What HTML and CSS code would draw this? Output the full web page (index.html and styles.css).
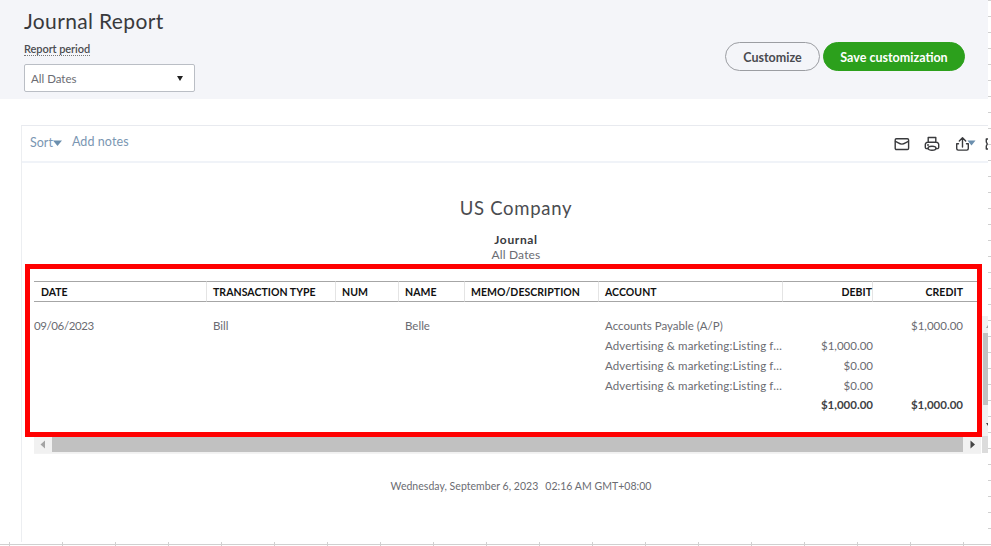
FILE: index.html
```
<!DOCTYPE html>
<html lang="en">
<head>
    <meta charset="UTF-8">
    <meta name="viewport" content="width=device-width, initial-scale=1.0">
    <title>Journal Report</title>
    <link rel="stylesheet" href="styles.css">
</head>
<body>
    <div class="page">
        <div class="screen">
            <header class="report-header">
                <div class="report-options">
                    <h1>Journal Report</h1>
                    <span class="period-label">Report period</span>
                    <div class="period-select">
                        <span>All Dates</span>
                        <svg width="6" height="5" viewBox="0 0 6 5"><path d="M0 0h6L3 5z" fill="#222"/></svg>
                    </div>
                </div>
                <div class="header-buttons">
                    <button class="btn">Customize</button>
                    <button class="btn btn-green">Save customization</button>
                </div>
            </header>

            <main class="panel">
                <div class="toolbar">
                    <div class="toolbar-links">
                        <a class="sort">Sort<svg width="9" height="6" viewBox="0 0 9 6"><path d="M0 .5h9L4.500 6z" fill="#6b8fae"/></svg></a>
                        <a class="notes">Add notes</a>
                    </div>
                    <div class="toolbar-icons">
                        <svg class="icon-mail" width="16" height="14" viewBox="0 0 16 14"><rect x="1.2" y="1.7" width="13.4" height="10.8" rx="1.2"/><path d="M1.5 4.5c2 .6 4 2.600 6.400 2.600s4.400-2 6.400-2.600"/></svg>
                        <svg class="icon-print" width="16" height="16" viewBox="0 0 16 16"><path d="M4.200 6V1.500h7.600V6M4 12.600H2.700a1.400 1.400 0 0 1-1.400-1.400V8.600A2.300 2.300 0 0 1 3.600 6.300h8.800a2.300 2.300 0 0 1 2.300 2.300v2.600a1.400 1.400 0 0 1-1.400 1.400H12"/><ellipse cx="8" cy="12.300" rx="4" ry="2"/><path d="M3.500 9h1"/></svg>
                        <svg class="icon-export" width="21" height="16" viewBox="0 0 21 16"><path d="M3.500 7.700H1.700v4.900a1.500 1.500 0 0 0 1.500 1.500h8.600a1.500 1.500 0 0 0 1.500-1.500V7.700h-1.800M7.500 11V2M4.300 5l3.200-3.200L10.700 5"/><path class="caret" d="M12.500 4.500h8l-4 5z"/></svg>
                        <svg class="icon-gear" width="3" height="14" viewBox="0 0 3 14"><path d="M3 2H1.300v3L2.300 7 1.300 9v3H3"/></svg>
                    </div>
                </div>

                <div class="report">
                    <h2>US Company</h2>
                    <p class="report-name">Journal</p>
                    <p class="report-range">All Dates</p>

                    <table class="journal">
                        <colgroup>
                            <col class="c-date"><col class="c-type"><col class="c-num"><col class="c-name">
                            <col class="c-memo"><col class="c-account"><col class="c-debit"><col class="c-credit">
                        </colgroup>
                        <thead>
                            <tr>
                                <th>DATE</th>
                                <th>TRANSACTION TYPE</th>
                                <th>NUM</th>
                                <th>NAME</th>
                                <th>MEMO/DESCRIPTION</th>
                                <th>ACCOUNT</th>
                                <th class="debit">DEBIT</th>
                                <th class="credit">CREDIT</th>
                            </tr>
                        </thead>
                        <tbody>
                            <tr class="first">
                                <td class="date">09/06/2023</td><td>Bill</td><td></td><td>Belle</td><td></td>
                                <td>Accounts Payable (A/P)</td><td class="debit"></td><td class="credit">$1,000.00</td>
                            </tr>
                            <tr>
                                <td></td><td></td><td></td><td></td><td></td>
                                <td class="account">Advertising &amp; marketing:Listing f…</td><td class="debit">$1,000.00</td><td></td>
                            </tr>
                            <tr>
                                <td></td><td></td><td></td><td></td><td></td>
                                <td class="account">Advertising &amp; marketing:Listing f…</td><td class="debit">$0.00</td><td></td>
                            </tr>
                            <tr>
                                <td></td><td></td><td></td><td></td><td></td>
                                <td class="account">Advertising &amp; marketing:Listing f…</td><td class="debit">$0.00</td><td></td>
                            </tr>
                            <tr class="total">
                                <td></td><td></td><td></td><td></td><td></td><td></td>
                                <td class="debit">$1,000.00</td><td class="credit">$1,000.00</td>
                            </tr>
                        </tbody>
                    </table>

                    <div class="scroll-x">
                        <svg width="18" height="16" viewBox="0 0 18 16"><path d="M11 3.500v8L6.500 7.500z" fill="#a3a3a3"/></svg>
                        <div class="thumb-x"></div>
                        <svg width="18" height="16" viewBox="0 0 18 16"><path d="M7.500 3.500v8l4.500-4z" fill="#444"/></svg>
                    </div>

                    <p class="timestamp"><span>Wednesday, September 6, 2023</span><span>02:16 AM GMT+08:00</span></p>
                </div>
            </main>

            <!-- vertical scrollbar, cut off by the screen edge -->
            <div class="scroll-y">
                <div class="track-y">
                    <svg width="2" height="3" viewBox="0 0 2 3"><path d="M2 0v3H0z" fill="#a3a3a3"/></svg>
                    <div class="thumb-y"></div>
                    <svg width="2" height="3" viewBox="0 0 2 3"><path d="M0 0h2v3z" fill="#444"/></svg>
                </div>
                <div class="corner"></div>
            </div>
            <div class="highlight"></div>
        </div>
        <div class="ruler-right"></div>
        <div class="ruler-bottom"></div>
    </div>
</body>
</html>
```
FILE: styles.css
```
* {
    box-sizing: border-box;
}

body {
    margin: 0;
    background: #fff;
    font-family: Lato, "Liberation Sans", sans-serif;
    font-variant-ligatures: none;
    color: #6b6c72;
    overflow: hidden;
}

h1, h2, p {
    margin: 0;
    font-weight: normal;
}

svg {
    display: block;
    flex: none;
}

.page {
    display: grid;
    grid-template-columns: 988px 3px;
    grid-template-rows: 542px 4px;
    width: 991px;
    height: 546px;
}

.screen {
    position: relative;
    overflow: hidden;
}

/* spreadsheet edges */
.ruler-right {
    background: repeating-linear-gradient(#d0d0d0 0 1px, #fff 1px 16px);
}

.ruler-bottom {
    grid-column: 1 / 3;
    background:
        linear-gradient(#d0d0d0, #d0d0d0) 0 2px / 100% 1px no-repeat,
        repeating-linear-gradient(90deg, #fff 0 9px, #d0d0d0 9px 10px, #fff 10px 53px);
}

/* header */
.report-header {
    display: flex;
    justify-content: space-between;
    height: 99px;
    padding: 0 23px 0 24px;
    background: #f4f5f9;
}

h1 {
    height: 42px;
    line-height: 42px;
    font-size: 21px;
    letter-spacing: 0.35px;
    color: #393a3d;
}

.period-label {
    display: block;
    width: 66px;
    height: 14px;
    border-bottom: 1px dotted #777;
    line-height: 14px;
    font-size: 11px;
    font-weight: 600;
    letter-spacing: -0.08px;
    white-space: nowrap;
    color: #4b4c50;
}

.period-select {
    display: flex;
    align-items: center;
    justify-content: space-between;
    width: 171px;
    height: 28px;
    margin-top: 8px;
    padding: 0 11px 0 6px;
    border: 1px solid #babec5;
    border-radius: 2px;
    background: #fff;
    font-size: 11.5px;
}

.header-buttons {
    display: flex;
    gap: 3px;
    padding-top: 42px;
}

.btn {
    width: 95px;
    height: 29px;
    padding: 2px 0 0;
    border: 1px solid #9b9da2;
    border-radius: 15px;
    background: transparent;
    font-family: inherit;
    font-size: 12.5px;
    font-weight: bold;
    color: #4a4b50;
    white-space: nowrap;
}

.btn-green {
    width: 142px;
    border-color: #2ca01c;
    background: #2ca01c;
    color: #fff;
}

/* report panel */
.panel {
    height: 417px;
    margin: 26px 0 0 21px;
    border-top: 1px solid #e8eaef;
    border-left: 1px solid #eceef1;
}

.toolbar {
    display: flex;
    justify-content: space-between;
    height: 37px;
    border-bottom: 2px solid #f0f3f8;
}

.toolbar-links {
    display: flex;
    gap: 10px;
    padding-left: 8px;
    line-height: 32px;
    font-size: 12.5px;
    color: #7a96b2;
}

.sort {
    display: flex;
    align-items: center;
    height: 33px;
}

.notes {
    letter-spacing: 0.1px;
}

.toolbar-icons {
    display: flex;
    align-items: center;
    height: 35px;
    fill: none;
    stroke: #393a3d;
    stroke-width: 1.4;
    stroke-linejoin: round;
    stroke-linecap: round;
}

.icon-mail {
    margin-right: 14px;
}

.icon-print {
    margin-right: 15px;
}

.icon-export {
    margin-right: 9px;
}

.caret {
    fill: #6b8fae;
    stroke: none;
}

.report {
    text-align: center;
}

h2 {
    height: 68px;
    padding-top: 32px;
    line-height: 26px;
    font-size: 18.5px;
    letter-spacing: 0.7px;
    color: #4b4c50;
}

.report-name {
    height: 16px;
    padding-top: 1px;
    line-height: 16px;
    font-size: 12px;
    font-weight: bold;
    letter-spacing: 0.65px;
    color: #393a3d;
}

.report-range {
    height: 16px;
    line-height: 16px;
    font-size: 12px;
    letter-spacing: 0.15px;
}

.report h2, .report-name, .report-range {
    width: 988px;
}

.journal {
    width: 943px;
    margin: 18px 0 0 12px;
    table-layout: fixed;
    border-collapse: separate;
    border-spacing: 0;
    text-align: left;
    font-size: 11.5px;
}

.c-date { width: 173px; }
.c-type { width: 129px; }
.c-num { width: 63px; }
.c-name { width: 66px; }
.c-memo { width: 134px; }
.c-account { width: 184px; }
.c-debit { width: 90px; }
.c-credit { width: 104px; }

th {
    height: 21px;
    padding: 0 0 0 7px;
    border-top: 1px solid #a6a6a6;
    border-bottom: 1px solid #a6a6a6;
    border-right: 1px solid #e4e4e4;
    font-size: 10.5px;
    font-weight: bold;
    color: #111;
    white-space: nowrap;
}

th:not(:first-child) {
    padding-left: 6px;
    letter-spacing: 0.05px;
}

th:last-child {
    border-right: none;
}

td {
    height: 20px;
    padding: 0 0 0 6px;
    line-height: 19px;
    white-space: nowrap;
}

td.date {
    padding-left: 0;
    letter-spacing: -0.4px;
}

.account {
    letter-spacing: 0.13px;
}

.first td {
    height: 33px;
    padding-top: 14px;
}

.total {
    font-weight: bold;
    color: #404145;
}

.total td {
    height: 19px;
    line-height: 18px;
}

.journal .debit {
    padding-left: 0;
    text-align: right;
}

.journal .credit {
    padding-right: 14px;
    text-align: right;
}

.scroll-x {
    display: flex;
    width: 947px;
    height: 17px;
    margin: 23px 0 0 12px;
    border-bottom: 1px solid #f3f3f3;
    background: #f1f1f1;
}

.thumb-x {
    flex: 1;
    height: 15px;
    background: #c1c1c1;
}

.timestamp {
    display: flex;
    justify-content: center;
    gap: 7px;
    width: 998px;
    margin-top: 25px;
    line-height: 14px;
    font-size: 10.5px;
    letter-spacing: 0.03px;
}

.scroll-y {
    position: absolute;
    left: 982px;
    top: 316px;
    width: 6px;
}

.track-y {
    display: flex;
    flex-direction: column;
    align-items: flex-end;
    justify-content: space-between;
    height: 120px;
    padding: 9px 0 10px;
    background: #f1f1f1;
}

.thumb-y {
    width: 5px;
    height: 72px;
    margin-bottom: 13px;
    background: #c1c1c1;
}

.corner {
    height: 17px;
    background: #dcdcdc;
}

/* red callout drawn over the table */
.highlight {
    position: absolute;
    left: 25px;
    top: 264px;
    width: 957px;
    height: 173px;
    border: 5px solid #f00;
}
```
